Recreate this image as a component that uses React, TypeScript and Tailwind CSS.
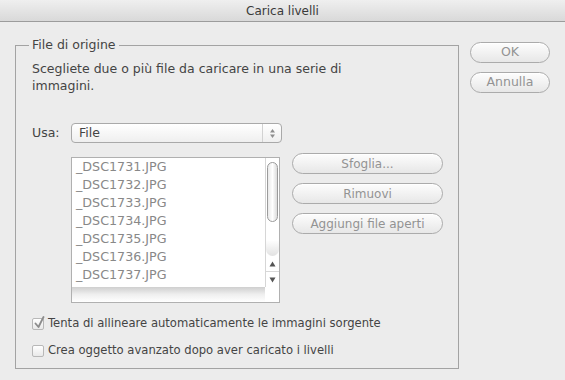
import React from 'react';

const files = [
  '_DSC1731.JPG',
  '_DSC1732.JPG',
  '_DSC1733.JPG',
  '_DSC1734.JPG',
  '_DSC1735.JPG',
  '_DSC1736.JPG',
  '_DSC1737.JPG',
  '_DSC1738.JPG',
];

function PillButton({ label, className }: { label: string; className: string }) {
  return (
    <button
      className={`h-[21px] rounded-full border border-[#ababab] bg-gradient-to-b from-[#fdfdfd] via-[#f2f2f2] to-[#e7e7e7] text-[#939393] leading-none shadow-[inset_0_1px_0_#fff] ${className}`}
    >
      {label}
    </button>
  );
}

function Checkbox({ checked, label }: { checked: boolean; label: string }) {
  return (
    <div className="flex items-center gap-[4px] h-[14px]">
      <span className="relative w-[12px] h-[12px] rounded-[2px] border border-[#b8b8b8] bg-gradient-to-b from-white to-[#e9e9e9] shrink-0">
        {checked && (
          <svg className="absolute left-[1px] -top-[3px]" width="11" height="13" viewBox="0 0 11 13">
            <path d="M1.5 7.5 L4.5 11 L9.5 1" fill="none" stroke="#8c8c8c" strokeWidth="1.8" strokeLinecap="round" strokeLinejoin="round" />
          </svg>
        )}
      </span>
      <span>{label}</span>
    </div>
  );
}

export default function App() {
  return (
    <div className="w-[565px] h-[380px] bg-[#ececec] overflow-hidden font-['DejaVu_Sans',sans-serif] text-[12.5px] text-[#444]">
      <div className="h-[22px] flex items-center justify-center border-b border-[#9c9c9c] bg-gradient-to-b from-[#efefef] to-[#d9d9d9] text-[12px] text-[#3a3a3a]">
        Carica livelli
      </div>

      <div className="flex">
        {/* group box */}
        <div className="relative ml-[15px] mt-[23px] w-[444px] h-[324px] border border-[#a3a3a3]">
          <span className="absolute -top-[9px] left-[13px] px-[3px] bg-[#ececec] leading-[16px]">File di origine</span>

          <div className="pl-[16px] pt-[14px] leading-[17px] w-[350px]">
            Scegliete due o più file da caricare in una serie di immagini.
          </div>

          <div className="flex items-center mt-[29px] pl-[16px]">
            <span className="w-[39px]">Usa:</span>
            <div className="flex w-[211px] h-[20px] rounded-[4px] border border-[#a9a9a9] bg-gradient-to-b from-white to-[#efefef]">
              <span className="flex-1 pl-[7px] leading-[18px]">File</span>
              <span className="w-[19px] border-l border-[#d2d2d2] flex items-center justify-center">
                <svg width="7" height="11" viewBox="0 0 7 11">
                  <path d="M3.5 1 L6 4.5 L1 4.5 Z" fill="#8e8e8e" />
                  <path d="M3.5 10 L6 6.5 L1 6.5 Z" fill="#8e8e8e" />
                </svg>
              </span>
            </div>
          </div>

          <div className="flex mt-[14px] pl-[55px]">
            {/* file list */}
            <div className="w-[209px] h-[146px] border border-[#b0b0b0] bg-white flex flex-col">
              <div className="flex flex-1 min-h-0">
                <div className="flex-1 overflow-hidden text-[#888] text-[12.7px]">
                  {files.map((f) => (
                    <div key={f} className="h-[18px] leading-[18px] pl-[4px]">
                      {f}
                    </div>
                  ))}
                </div>
                <div className="w-[14px] border-l border-[#d6d6d6] flex flex-col bg-white">
                  <div className="flex-1 relative">
                    <div className="absolute left-[1px] top-[4px] w-[11px] h-[60px] rounded-full border border-[#9b9b9b] bg-gradient-to-r from-[#e9e9e9] via-white to-[#dcdcdc]" />
                    <div className="absolute left-[0px] bottom-[0px] w-[13px] h-[16px] rounded-b-full bg-gradient-to-b from-white to-[#e2e2e2]" />
                  </div>
                  <div className="h-[16px] flex items-center justify-center border-b border-[#d8d8d8]">
                    <svg width="7" height="6" viewBox="0 0 7 6"><path d="M3.5 0.5 L6.5 5.5 L0.5 5.5 Z" fill="#555" /></svg>
                  </div>
                  <div className="h-[15px] flex items-center justify-center">
                    <svg width="7" height="6" viewBox="0 0 7 6"><path d="M3.5 5.5 L6.5 0.5 L0.5 0.5 Z" fill="#555" /></svg>
                  </div>
                </div>
              </div>
              <div className="flex h-[15px]">
                <div className="flex-1 bg-gradient-to-b from-[#cfcfcf] via-[#efefef] to-white" />
                <div className="w-[14px] bg-white" />
              </div>
            </div>

            <div className="flex flex-col gap-[9px] ml-[12px] -mt-[4px]">
              <PillButton label="Sfoglia..." className="w-[151px] text-[12px]" />
              <PillButton label="Rimuovi" className="w-[151px] text-[12px]" />
              <PillButton label="Aggiungi file aperti" className="w-[151px] text-[12px]" />
            </div>
          </div>

          <div className="flex flex-col gap-[13px] mt-[14px] pl-[16px] text-[11.6px]">
            <Checkbox checked label="Tenta di allineare automaticamente le immagini sorgente" />
            <Checkbox checked={false} label="Crea oggetto avanzato dopo aver caricato i livelli" />
          </div>
        </div>

        {/* dialog buttons */}
        <div className="flex flex-col gap-[9px] ml-[11px] mt-[20px]">
          <PillButton label="OK" className="w-[80px] text-[12.5px]" />
          <PillButton label="Annulla" className="w-[80px] text-[12.5px]" />
        </div>
      </div>
    </div>
  );
}
